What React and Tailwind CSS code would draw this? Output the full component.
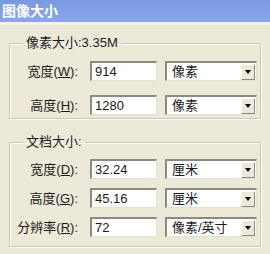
import React from 'react'

const font = { fontFamily: '"Liberation Sans", "Noto Sans CJK SC", sans-serif' }

function Label({ name, hot }) {
    return (
        <span className="w-[68px] text-right text-[13px] text-[#1a1a1a] leading-none">
            {name}(<span className="underline">{hot}</span>):
        </span>
    )
}

function Field({ value }) {
    return (
        <div className="ml-[12px] flex h-[20px] w-[67px] items-center border-t-2 border-l-2 border-r border-b border-t-[#8c8a80] border-l-[#8c8a80] border-r-[#e4e1d4] border-b-[#e4e1d4] bg-white pl-[3px] text-[13px] text-[#1a1a1a]">
            {value}
        </div>
    )
}

function Select({ value }) {
    return (
        <div className="ml-[8px] flex h-[20px] w-[92px] items-center border-t-2 border-l-2 border-r border-b border-t-[#8c8a80] border-l-[#8c8a80] border-r-[#e4e1d4] border-b-[#e4e1d4] bg-white pl-[5px] text-[13px] text-[#1a1a1a]">
            <span className="flex-1">{value}</span>
            <span className="mr-[1px] flex h-[16px] w-[14px] items-center justify-center border-t border-l border-r border-b border-t-white border-l-white border-r-[#8c8a80] border-b-[#8c8a80] bg-[#ece9d8]">
                <span className="h-0 w-0 border-x-[3.5px] border-t-[4px] border-x-transparent border-t-black" />
            </span>
        </div>
    )
}

function Row({ name, hot, value, unit }) {
    return (
        <div className="flex items-center">
            <Label name={name} hot={hot} />
            <Field value={value} />
            <Select value={unit} />
        </div>
    )
}

function Group({ title, children, className }) {
    return (
        <fieldset className={`mx-[9px] border border-[#cac7b5] shadow-[inset_1px_1px_0_#fff,1px_1px_0_#fff] ${className}`}>
            <legend className="ml-[13px] px-[3px] text-[13px] leading-[16px] text-[#1a1a1a]">{title}</legend>
            {children}
        </fieldset>
    )
}

export default function App() {
    return (
        <div className="h-[254px] w-[270px] overflow-hidden bg-[#ece9d8]" style={font}>
            <div className="flex h-[22px] items-center bg-gradient-to-b from-[#7a99e2] to-[#8aa7ea] pl-[2px] text-[14px] font-bold text-white">
                图像大小
            </div>
            <div className="h-[3px] bg-[#f6f2ea]" />
            <div className="pt-[10px]">
                <Group title="像素大小:3.35M" className="h-[84px] pt-[10px]">
                    <div className="flex flex-col gap-[14px]">
                        <Row name="宽度" hot="W" value="914" unit="像素" />
                        <Row name="高度" hot="H" value="1280" unit="像素" />
                    </div>
                </Group>
                <Group title="文档大小:" className="mt-[15px] h-[113px] pt-[9px]">
                    <div className="flex flex-col gap-[9px]">
                        <Row name="宽度" hot="D" value="32.24" unit="厘米" />
                        <Row name="高度" hot="G" value="45.16" unit="厘米" />
                        <Row name="分辨率" hot="R" value="72" unit="像素/英寸" />
                    </div>
                </Group>
            </div>
        </div>
    )
}
